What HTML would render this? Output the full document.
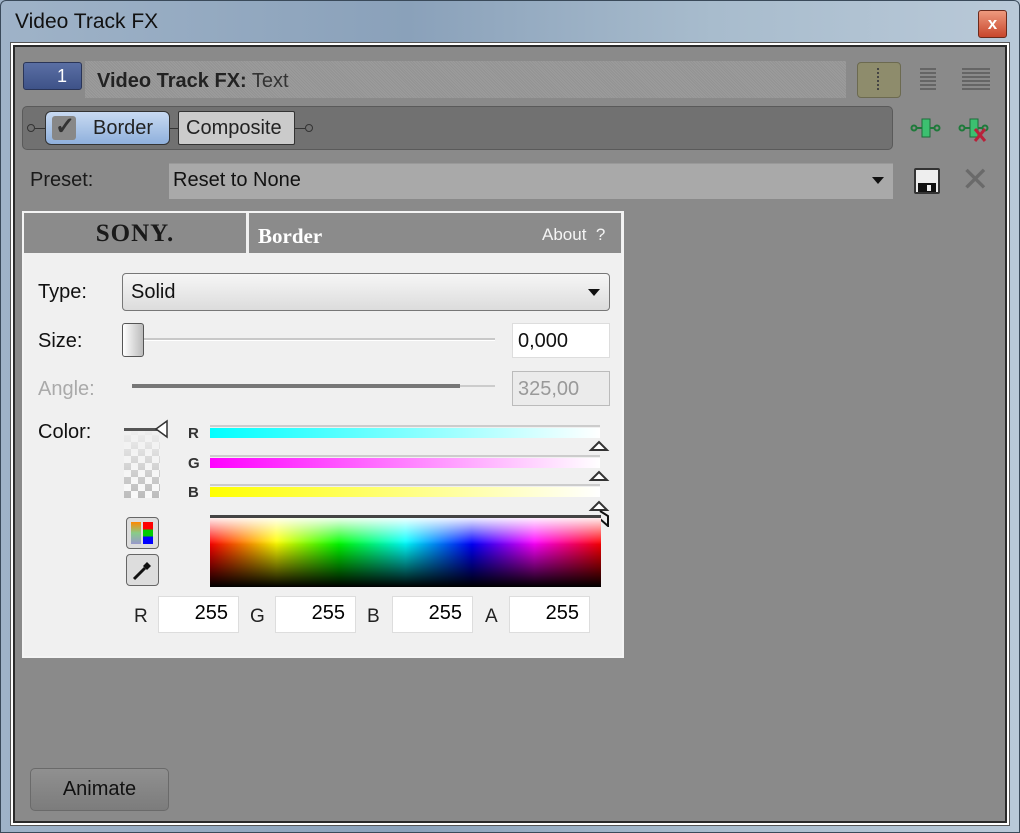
<!DOCTYPE html>
<html><head><meta charset="utf-8"><style>
*{box-sizing:border-box;margin:0;padding:0}
body{width:1020px;height:833px;overflow:hidden;font-family:"Liberation Sans",sans-serif;background:linear-gradient(90deg,#9fb3c8,#8aa1ba 40%,#a8bccd 70%,#b9c9d8);position:relative}
.a{position:absolute}
.txt{font-size:20px;color:#111}
</style></head><body>
<div class="a" style="left:0;top:0;width:1020px;height:833px;border:1px solid #3a4a5a;border-radius:6px 6px 0 0"></div>
<div class="a txt" style="left:15px;top:10px;font-size:21px">Video Track FX</div>
<div class="a" style="left:978px;top:10px;width:29px;height:28px;background:linear-gradient(#ee9a7e,#c8462c);border:1px solid #6b2a1c;border-radius:3px;color:#fff;font-weight:bold;font-size:17px;text-align:center;line-height:25px">x</div>
<div class="a" style="left:10px;top:42px;width:1000px;height:784px;background:#fff;border:1px solid #555"></div>
<div class="a" style="left:13px;top:45px;width:994px;height:778px;background:#8a8a8a;border:2px solid #2a2a2a"></div>

<div class="a" style="left:23px;top:62px;width:59px;height:28px;background:linear-gradient(#5a6fa4,#3e5288);border:1px solid #2a3558;border-radius:3px;color:#fff;font-size:18px;text-align:right;padding-right:14px;line-height:26px">1</div>
<div class="a" style="left:85px;top:61px;width:761px;height:37px;background:repeating-linear-gradient(45deg,#9c9c9c 0 1px,#939393 1px 2px)"></div>
<div class="a txt" style="left:97px;top:70px"><b style="color:#222">Video Track FX:</b> <span style="color:#333">Text</span></div>
<div class="a" style="left:857px;top:62px;width:44px;height:36px;background:#8e8c6c;border:1px solid #6c6a50;border-radius:4px"></div>
<div class="a" style="left:877px;top:68px;width:4px;height:22px;border-left:2px dotted #444"></div>
<div class="a" style="left:920px;top:68px;width:16px;height:22px;background:repeating-linear-gradient(#555 0 2px,transparent 2px 4px);opacity:.7"></div>
<div class="a" style="left:962px;top:68px;width:28px;height:22px;background:repeating-linear-gradient(#555 0 2px,transparent 2px 4px);opacity:.7"></div>

<div class="a" style="left:22px;top:106px;width:871px;height:44px;background:#717171;border:1px solid #5a5a5a;border-radius:5px"></div>
<div class="a" style="left:27px;top:124px;width:8px;height:8px;border:1px solid #333;border-radius:50%"></div>
<div class="a" style="left:35px;top:128px;width:10px;border-top:1px solid #333"></div>
<div class="a" style="left:45px;top:111px;width:125px;height:34px;background:linear-gradient(#c8daf2,#8fb0dc);border:1px solid #333;border-radius:6px"></div>
<div class="a" style="left:52px;top:116px;width:24px;height:24px;background:#888;border-radius:3px"></div>
<div class="a" style="left:55px;top:112px;color:#333;font-size:24px;font-weight:bold">✓</div>
<div class="a txt" style="left:93px;top:117px;color:#222">Border</div>
<div class="a" style="left:170px;top:128px;width:8px;border-top:1px solid #333"></div>
<div class="a" style="left:178px;top:111px;width:117px;height:34px;background:#cbcbcb;border:1px solid #333;border-radius:2px"></div>
<div class="a txt" style="left:186px;top:117px;color:#222">Composite</div>
<div class="a" style="left:295px;top:128px;width:10px;border-top:1px solid #333"></div>
<div class="a" style="left:305px;top:124px;width:8px;height:8px;border:1px solid #333;border-radius:50%"></div>
<svg class="a" style="left:910px;top:115px" width="34" height="26"><circle cx="4" cy="13" r="2.5" fill="none" stroke="#1e7a3a" stroke-width="2"/><line x1="6" y1="13" x2="12" y2="13" stroke="#1e7a3a" stroke-width="2"/><rect x="12" y="4" width="8" height="18" fill="#3cc070" stroke="#1e6b3a"/><line x1="20" y1="13" x2="25" y2="13" stroke="#1e7a3a" stroke-width="2"/><circle cx="27" cy="13" r="2.5" fill="none" stroke="#1e7a3a" stroke-width="2"/></svg>
<svg class="a" style="left:958px;top:115px" width="36" height="30"><circle cx="4" cy="13" r="2.5" fill="none" stroke="#1e7a3a" stroke-width="2"/><line x1="6" y1="13" x2="12" y2="13" stroke="#1e7a3a" stroke-width="2"/><rect x="12" y="4" width="8" height="18" fill="#3cc070" stroke="#1e6b3a"/><line x1="20" y1="13" x2="25" y2="13" stroke="#1e7a3a" stroke-width="2"/><circle cx="27" cy="13" r="2.5" fill="none" stroke="#1e7a3a" stroke-width="2"/><path d="M17 14 L27 26 M27 14 L17 26" stroke="#b8223a" stroke-width="3"/></svg>

<div class="a txt" style="left:30px;top:169px;color:#1a1a1a">Preset:</div>
<div class="a" style="left:169px;top:163px;width:724px;height:36px;background:#a9a9a9;border-top:1px solid #999"></div>
<div class="a txt" style="left:173px;top:169px;color:#111">Reset to None</div>
<div class="a" style="left:872px;top:177px;width:0;height:0;border-left:6px solid transparent;border-right:6px solid transparent;border-top:7px solid #111"></div>
<div class="a" style="left:914px;top:168px;width:26px;height:26px;background:#eee;border:2px solid #333;border-radius:2px"></div>
<div class="a" style="left:918px;top:183px;width:18px;height:9px;background:#111"></div>
<div class="a" style="left:927px;top:185px;width:4px;height:6px;background:#eee"></div>
<div class="a" style="left:961px;top:160px;color:#6a6a6a;font-size:34px">✕</div>

<div class="a" style="left:22px;top:211px;width:602px;height:447px;background:#f0f0f0;border:2px solid #f4f4f4"></div>
<div class="a" style="left:24px;top:213px;width:222px;height:40px;background:#8b8b8b"></div>
<div class="a" style="left:249px;top:213px;width:372px;height:40px;background:#8b8b8b"></div>
<div class="a" style="left:24px;top:220px;width:222px;text-align:center;font-family:'Liberation Serif',serif;font-weight:bold;font-size:25px;color:#1a1a1a;letter-spacing:1px">SONY.</div>
<div class="a" style="left:258px;top:224px;font-family:'Liberation Serif',serif;font-weight:bold;font-size:21px;color:#fff">Border</div>
<div class="a" style="left:542px;top:225px;font-size:17px;color:#f4f4f4">About&nbsp;&nbsp;?</div>

<div class="a txt" style="left:38px;top:281px">Type:</div>
<div class="a" style="left:122px;top:273px;width:488px;height:38px;background:linear-gradient(#f6f6f6,#dcdcdc);border:1px solid #777;border-radius:4px"></div>
<div class="a txt" style="left:131px;top:281px">Solid</div>
<div class="a" style="left:588px;top:289px;width:0;height:0;border-left:6px solid transparent;border-right:6px solid transparent;border-top:7px solid #111"></div>

<div class="a txt" style="left:38px;top:330px">Size:</div>
<div class="a" style="left:140px;top:338px;width:355px;height:3px;background:#c8c8c8;border-bottom:1px solid #fff"></div>
<div class="a" style="left:122px;top:323px;width:22px;height:34px;background:linear-gradient(90deg,#fff,#bbb);border:1px solid #555;border-radius:3px"></div>
<div class="a" style="left:512px;top:323px;width:98px;height:35px;background:#fff;border:1px solid #ddd"></div>
<div class="a txt" style="left:518px;top:330px">0,000</div>

<div class="a txt" style="left:38px;top:378px;color:#aaa">Angle:</div>
<div class="a" style="left:132px;top:385px;width:363px;height:2px;background:#ccc"></div>
<div class="a" style="left:132px;top:384px;width:328px;height:4px;background:#777"></div>
<div class="a" style="left:512px;top:371px;width:98px;height:35px;background:#ebebeb;border:1px solid #bbb"></div>
<div class="a txt" style="left:518px;top:378px;color:#999">325,00</div>

<div class="a txt" style="left:38px;top:421px">Color:</div>
<div class="a" style="left:124px;top:428px;width:36px;height:70px;background-color:#fff;background-image:linear-gradient(45deg,#999 25%,transparent 25%,transparent 75%,#999 75%),linear-gradient(45deg,#999 25%,transparent 25%,transparent 75%,#999 75%);background-size:14px 14px;background-position:0 0,7px 7px;opacity:.6;-webkit-mask:linear-gradient(#0000,#000)"></div>
<div class="a" style="left:124px;top:428px;width:36px;border-top:3px solid #555"></div>
<svg class="a" style="left:154px;top:419px" width="16" height="20"><path d="M13 2 L2 10 L13 18 Z" fill="#fff" stroke="#333" stroke-width="1.5"/></svg>

<div class="a" style="left:188px;top:425px;font-size:15px;font-weight:bold;color:#333">R</div>
<div class="a" style="left:188px;top:455px;font-size:15px;font-weight:bold;color:#333">G</div>
<div class="a" style="left:188px;top:484px;font-size:15px;font-weight:bold;color:#333">B</div>
<div class="a" style="left:210px;top:425px;width:390px;height:15px;border-top:2px solid #ccc;background:linear-gradient(90deg,#0ff,#fff) 0 1px/100% 10px no-repeat"></div>
<div class="a" style="left:210px;top:455px;width:390px;height:15px;border-top:2px solid #ccc;background:linear-gradient(90deg,#f0f,#fff) 0 1px/100% 10px no-repeat"></div>
<div class="a" style="left:210px;top:484px;width:390px;height:15px;border-top:2px solid #ccc;background:linear-gradient(90deg,#ff0,#fff) 0 1px/100% 10px no-repeat"></div>
<svg class="a" style="left:588px;top:435px" width="24" height="92"><path d="M3 15 L11 7 L19 15 Z M3 45 L11 37 L19 45 Z M3 75 L11 67 L19 75 Z" fill="#fff" stroke="#333" stroke-width="2"/><path d="M12 76 L20 81 L20 91 L12 84" fill="none" stroke="#111" stroke-width="2"/></svg>

<div class="a" style="left:210px;top:516px;width:391px;height:71px;background:linear-gradient(#0000 35%,#000),linear-gradient(90deg,#f00,#ff0 17%,#0f0 33%,#0ff 50%,#00f 67%,#f0f 83%,#f00)"></div>
<div class="a" style="left:210px;top:516px;width:391px;height:71px;background:linear-gradient(#ffff,#fff0 40%)"></div>
<div class="a" style="left:210px;top:515px;width:391px;height:3px;background:#444"></div>

<div class="a" style="left:126px;top:517px;width:33px;height:32px;background:#ddd;border:1px solid #666;border-radius:4px"></div>
<div class="a" style="left:131px;top:522px;width:10px;height:22px;background:linear-gradient(#f80,#8c8,#99c)"></div>
<div class="a" style="left:143px;top:522px;width:10px;height:22px;background:linear-gradient(#f00 33%,#0c0 33% 66%,#00f 66%)"></div>
<div class="a" style="left:126px;top:554px;width:33px;height:32px;background:#ddd;border:1px solid #666;border-radius:4px"></div>
<svg class="a" style="left:130px;top:558px" width="25" height="25"><path d="M4 21 L15 10" stroke="#111" stroke-width="3"/><path d="M13 8 L17 4 L21 8 L17 12 Z" fill="#111"/></svg>

<div class="a" style="left:134px;top:606px;font-size:19px;color:#222">R</div>
<div class="a" style="left:250px;top:606px;font-size:19px;color:#222">G</div>
<div class="a" style="left:367px;top:606px;font-size:19px;color:#222">B</div>
<div class="a" style="left:485px;top:606px;font-size:19px;color:#222">A</div>
<div class="a" style="left:158px;top:596px;width:81px;height:37px;background:#fff;border:1px solid #ddd;text-align:right;padding:5px 10px 0 0;font-size:20px">255</div>
<div class="a" style="left:275px;top:596px;width:81px;height:37px;background:#fff;border:1px solid #ddd;text-align:right;padding:5px 10px 0 0;font-size:20px">255</div>
<div class="a" style="left:392px;top:596px;width:81px;height:37px;background:#fff;border:1px solid #ddd;text-align:right;padding:5px 10px 0 0;font-size:20px">255</div>
<div class="a" style="left:509px;top:596px;width:81px;height:37px;background:#fff;border:1px solid #ddd;text-align:right;padding:5px 10px 0 0;font-size:20px">255</div>

<div class="a" style="left:30px;top:768px;width:139px;height:43px;background:linear-gradient(#909090,#7c7c7c);border:1px solid #6a6a6a;border-radius:5px;text-align:center;line-height:41px;font-size:20px;color:#111">Animate</div>
</body></html>
